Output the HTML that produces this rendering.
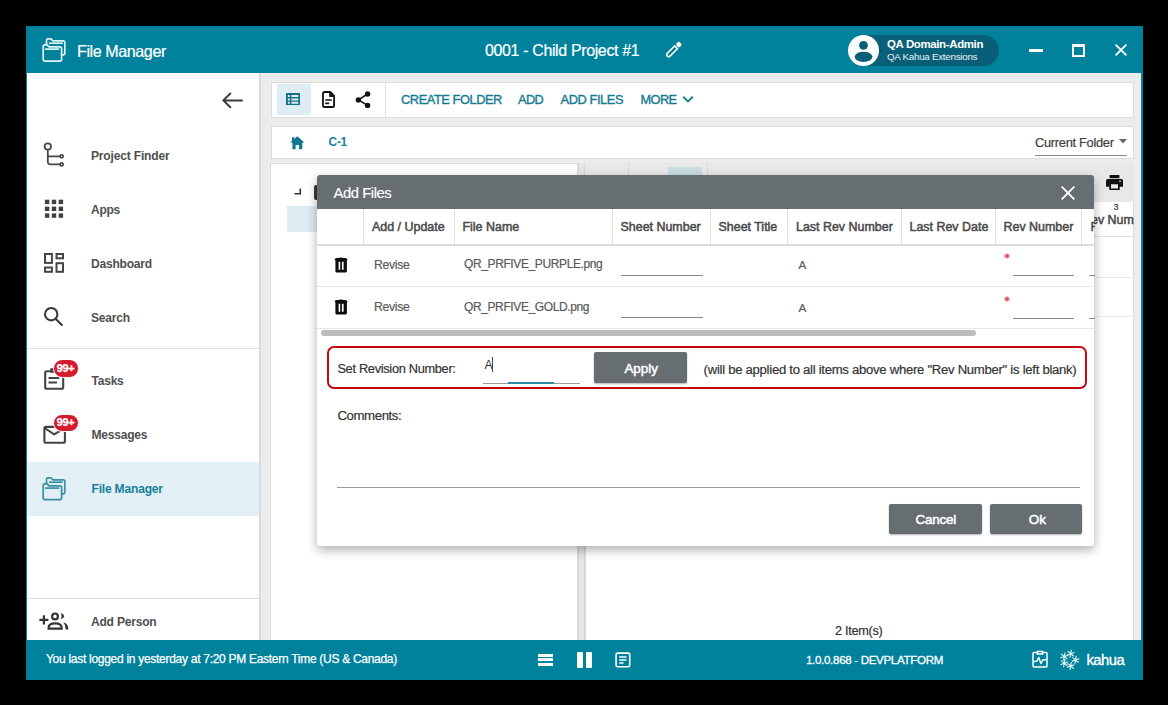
<!DOCTYPE html>
<html><head><meta charset="utf-8">
<style>
*{box-sizing:border-box;margin:0;padding:0}
html,body{width:1168px;height:705px;overflow:hidden;background:#000;font-family:"Liberation Sans",sans-serif}
.a{position:absolute}
.t{position:absolute;white-space:nowrap;line-height:1}
.b{font-weight:bold}
.sb{font-size:11.7px;font-weight:bold;color:#4f4f4f}
.tb{font-size:12.2px;color:#157a91;-webkit-text-stroke:0.35px #157a91}
.th{font-size:12.45px;font-weight:normal;color:#4a4a4a;-webkit-text-stroke:0.5px #4a4a4a}
.td{font-size:11.7px;color:#5a5a5a;-webkit-text-stroke:0.2px #5a5a5a}
.vl{position:absolute;width:1px;background:#dedede}
.hl{position:absolute;height:1px;background:#e2e2e2}
svg{position:absolute;overflow:visible}
</style></head><body>
<!-- ===== frame ===== -->
<div class="a" style="left:26px;top:26px;width:1117px;height:654px;background:#00819c"></div>
<div class="a" style="left:27px;top:73px;width:232px;height:567px;background:#fff"></div>
<div class="a" style="left:259px;top:73px;width:882px;height:567px;background:#ececec"></div>
<div class="a" style="left:259px;top:73px;width:2px;height:567px;background:#dadada"></div>

<!-- ===== header ===== -->
<svg style="left:36px;top:33px" width="36" height="34" viewBox="0 0 36 34" fill="none" stroke="#dff5f8" stroke-width="1.7" stroke-linejoin="round">
  <path d="M10.5 11.6V7.3a1.5 1.5 0 0 1 1.5-1.5h3l1.8 2h10.5a1.5 1.5 0 0 1 1.5 1.5v11a1.5 1.5 0 0 1-1.5 1.5h-1.3"/>
  <path d="M13 10.2H26.8"/>
  <path d="M7.2 13.4a1.5 1.5 0 0 1 1.5-1.5h2.5l1.9 2h11a1.5 1.5 0 0 1 1.5 1.5V26.6a1.5 1.5 0 0 1-1.5 1.5H8.7a1.5 1.5 0 0 1-1.5-1.5Z"/>
  <path d="M9 16.1H23.2"/>
</svg>
<div class="t" style="left:77px;top:42.65px;font-size:16.07px;color:#fff;-webkit-text-stroke:0.2px #fff;letter-spacing:-0.406px">File Manager</div>
<div class="t" style="left:485px;top:42.56px;font-size:15.96px;color:#fff;-webkit-text-stroke:0.2px #fff;letter-spacing:-0.351px">0001 - Child Project #1</div>
<svg style="left:660px;top:36px" width="30" height="28" viewBox="0 0 30 28">
  <g transform="translate(7.3 20.1) rotate(-45)">
    <path d="M1.9 -1.9H12.4V1.9H1.9A1.9 1.9 0 0 1 1.9 -1.9Z" fill="none" stroke="#f2fbfc" stroke-width="1.6"/>
    <path d="M3 0H11.5" stroke="#1d4f5e" stroke-width="0.9"/>
    <rect x="14" y="-2.4" width="4.6" height="4.8" rx="1.6" fill="#fff"/>
  </g>
</svg>
<!-- user pill -->
<div class="a" style="left:848px;top:34.5px;width:151px;height:31px;border-radius:15.5px;background:#0a5f78"></div>
<div class="a" style="left:848px;top:34.5px;width:31px;height:31px;border-radius:50%;background:#fff"></div>
<svg style="left:848px;top:34.5px" width="31" height="31" viewBox="0 0 31 31">
  <circle cx="15.5" cy="10.3" r="4.4" fill="#0a5f78"/>
  <ellipse cx="15.5" cy="21.8" rx="8.9" ry="5.1" fill="#0a5f78"/>
</svg>
<div class="t b" style="left:887px;top:38.74px;font-size:11.45px;color:#fff;letter-spacing:-0.344px">QA Domain-Admin</div>
<div class="t" style="left:887px;top:51.71px;font-size:9.77px;color:#e6f2f5;letter-spacing:-0.251px">QA Kahua Extensions</div>
<!-- window controls -->
<div class="a" style="left:1029px;top:48.5px;width:13.5px;height:3.5px;background:#fff"></div>
<div class="a" style="left:1071.5px;top:43.7px;width:13.6px;height:13px;border:2px solid #fff;border-top-width:3.5px"></div>
<svg style="left:1115px;top:44.3px" width="12" height="12" viewBox="0 0 12 12" stroke="#fff" stroke-width="1.9">
  <path d="M0.6 0.6L11.4 11.4M11.4 0.6L0.6 11.4"/>
</svg>

<!-- ===== sidebar ===== -->
<svg style="left:222px;top:92px" width="21" height="17" viewBox="0 0 21 17" fill="none" stroke="#3a3a3a" stroke-width="2" stroke-linecap="round" stroke-linejoin="round">
  <path d="M20 8.4H1.5M8.3 1.5L1.3 8.4l7 6.9"/>
</svg>
<!-- project finder -->
<svg style="left:36px;top:138px" width="36" height="34" viewBox="0 0 36 34" fill="none" stroke="#484848" stroke-width="1.8">
  <circle cx="11.8" cy="8.5" r="3.2"/>
  <path d="M11.8 11.7V24a2.4 2.4 0 0 0 2.4 2.4H24.1M11.8 18.3H24.1"/>
  <circle cx="25.6" cy="18.3" r="1.5"/>
  <circle cx="25.6" cy="26.4" r="1.5"/>
</svg>
<div class="t sb" style="left:91px;top:149.60px;font-size:12.05px;letter-spacing:-0.181px">Project Finder</div>
<!-- apps -->
<svg style="left:36px;top:192px" width="36" height="34" viewBox="0 0 36 34" fill="#3f3f3f">
  <rect x="8.9" y="7.7" width="4.4" height="4.4"/><rect x="15.8" y="7.7" width="4.4" height="4.4"/><rect x="22.7" y="7.7" width="4.4" height="4.4"/>
  <rect x="8.9" y="14.6" width="4.4" height="4.4"/><rect x="15.8" y="14.6" width="4.4" height="4.4"/><rect x="22.7" y="14.6" width="4.4" height="4.4"/>
  <rect x="8.9" y="21.4" width="4.4" height="4.4"/><rect x="15.8" y="21.4" width="4.4" height="4.4"/><rect x="22.7" y="21.4" width="4.4" height="4.4"/>
</svg>
<div class="t sb" style="left:91px;top:203.60px;font-size:12.05px;letter-spacing:-0.292px">Apps</div>
<!-- dashboard -->
<svg style="left:36px;top:246px" width="36" height="34" viewBox="0 0 36 34" fill="none" stroke="#454545" stroke-width="2">
  <rect x="9" y="8" width="6.9" height="8.9"/>
  <rect x="20.5" y="8" width="6.5" height="4.3"/>
  <rect x="9" y="21.5" width="6.9" height="4.3"/>
  <rect x="20.5" y="17.2" width="6.5" height="8.6"/>
</svg>
<div class="t sb" style="left:91px;top:257.70px;font-size:12.05px;letter-spacing:-0.229px">Dashboard</div>
<!-- search -->
<svg style="left:36px;top:300px" width="36" height="34" viewBox="0 0 36 34" fill="none" stroke="#3a3a3a" stroke-width="2.1" stroke-linecap="round">
  <circle cx="15.2" cy="14.2" r="6.2"/>
  <path d="M19.8 18.9L25.8 24.9"/>
</svg>
<div class="t sb" style="left:91px;top:311.90px;font-size:12.05px;letter-spacing:-0.234px">Search</div>
<div class="a" style="left:27px;top:348px;width:232px;height:1px;background:#e0e0e0"></div>
<!-- tasks -->
<svg style="left:36px;top:355px" width="48" height="40" viewBox="0 0 48 40" fill="none" stroke="#444" stroke-width="2.1">
  <rect x="9.2" y="16.3" width="18" height="17.4" rx="1.5"/>
  <path d="M15.3 14.2h4.5v2.5h-4.5Z" fill="#444"/>
  <path d="M12.5 23H23.3M12.5 27.5H21"/>
</svg>
<div class="a" style="left:53.4px;top:359.3px;width:25.4px;height:18.6px;border-radius:9.3px;background:#d31b2d;border:0.8px solid #fff"></div>
<div class="t b" style="left:56.8px;top:363.2px;font-size:11px;letter-spacing:-0.4px;color:#fff;-webkit-text-stroke:0.25px #fff">99+</div>
<div class="t sb" style="left:91.5px;top:374.60px;font-size:12.05px;letter-spacing:-0.242px">Tasks</div>
<!-- messages -->
<svg style="left:36px;top:410px" width="48" height="40" viewBox="0 0 48 40" fill="none" stroke="#444" stroke-width="2.1" stroke-linejoin="round">
  <rect x="8.4" y="16.9" width="20.5" height="15.9" rx="1.5"/>
  <path d="M8.6 18l9.6 6.4 10.5-6.4"/>
</svg>
<div class="a" style="left:53.4px;top:413.5px;width:25.4px;height:18.6px;border-radius:9.3px;background:#d31b2d;border:0.8px solid #fff"></div>
<div class="t b" style="left:56.8px;top:417.4px;font-size:11px;letter-spacing:-0.4px;color:#fff;-webkit-text-stroke:0.25px #fff">99+</div>
<div class="t sb" style="left:91.5px;top:428.80px;font-size:12.05px;letter-spacing:-0.240px">Messages</div>
<!-- file manager (active) -->
<div class="a" style="left:28px;top:462px;width:231px;height:53.5px;background:#e2eff4"></div>
<svg style="left:36px;top:471.6px" width="36" height="34" viewBox="0 0 36 34" fill="none" stroke="#3a8fa2" stroke-width="1.7" stroke-linejoin="round">
  <path d="M10.5 11.6V7.3a1.5 1.5 0 0 1 1.5-1.5h3l1.8 2h10.5a1.5 1.5 0 0 1 1.5 1.5v11a1.5 1.5 0 0 1-1.5 1.5h-1.3"/>
  <path d="M13 10.2H26.8"/>
  <path d="M7.2 13.4a1.5 1.5 0 0 1 1.5-1.5h2.5l1.9 2h11a1.5 1.5 0 0 1 1.5 1.5V26.1a1.5 1.5 0 0 1-1.5 1.5H8.7a1.5 1.5 0 0 1-1.5-1.5Z"/>
  <path d="M9 16.1H23.2"/>
</svg>
<div class="t sb" style="left:91.5px;top:483.10px;color:#17809a;font-size:12.05px;letter-spacing:-0.195px">File Manager</div>
<div class="a" style="left:27px;top:597.5px;width:232px;height:1px;background:#dedede"></div>
<!-- add person -->
<svg style="left:32px;top:600px" width="44" height="40" viewBox="0 0 44 40" fill="none" stroke="#333" stroke-width="2.2">
  <path d="M7.4 19.8H16.4M11.9 15.3V24.4"/>
  <circle cx="23" cy="16.4" r="2.9"/>
  <path d="M16.6 28.6v-0.8c0-2.7 2.6-4.4 6.5-4.4s6.5 1.7 6.5 4.4v0.8Z"/>
  <path d="M28.6 12.8Q36 16.2 28.6 19.6Q30.6 16.2 28.6 12.8Z" fill="#333" stroke="none"/>
  <path d="M31.2 22.3Q36.4 23.6 36.4 29.5H33.7Q33.8 25 31.2 22.3Z" fill="#333" stroke="none"/>
</svg>
<div class="t sb" style="left:91px;top:615.80px;font-size:12.05px;letter-spacing:-0.219px">Add Person</div>


<!-- ===== main content ===== -->
<!-- toolbar -->
<div class="a" style="left:270.5px;top:81.5px;width:863px;height:36px;background:#fff;border:1px solid #dcdcdc"></div>
<div class="a" style="left:276.5px;top:84px;width:34.5px;height:30.5px;background:#deedf3"></div>
<svg style="left:286.1px;top:93.2px" width="14" height="12" viewBox="0 0 13.6 11.6" fill="#137088">
  <path d="M0 0h13.6v11.6H0Z M1.8 1.8v2.1h1.9V1.8Z M5.2 1.8v2.1H12V1.8Z M1.8 5.2v2h1.9v-2Z M5.2 5.2v2H12v-2Z M1.8 8.5v2h1.9v-2Z M5.2 8.5v2H12v-2Z" fill-rule="evenodd"/>
</svg>
<svg style="left:322px;top:91px" width="13" height="17" viewBox="0 0 13 17" fill="none" stroke="#111" stroke-width="1.8" stroke-linejoin="round">
  <path d="M2.6 1h5.8l3.7 3.8v9.6a1.6 1.6 0 0 1-1.6 1.6H2.6a1.6 1.6 0 0 1-1.6-1.6V2.6A1.6 1.6 0 0 1 2.6 1Z"/>
  <path d="M8.1 1.2v4h4" fill="#111"/>
  <path d="M3.9 9.0h5.2M3.9 12.3h2.6" stroke-width="1.7" stroke-linecap="round"/>
</svg>
<svg style="left:355px;top:90.5px" width="16" height="17" viewBox="0 0 16 17" fill="#111">
  <circle cx="12.6" cy="3" r="2.7"/><circle cx="3.4" cy="8.9" r="2.7"/><circle cx="12.6" cy="14.4" r="2.7"/>
  <path d="M3.4 8.9L12.6 3M3.4 8.9L12.6 14.4" stroke="#111" stroke-width="1.6"/>
</svg>
<div class="a" style="left:385px;top:82.5px;width:1px;height:34px;background:#e3e3e3"></div>
<div class="t tb" style="left:401px;top:94.48px;font-size:12.81px;letter-spacing:-0.422px">CREATE FOLDER</div>
<div class="t tb" style="left:518px;top:94.48px;font-size:12.81px;letter-spacing:-0.643px">ADD</div>
<div class="t tb" style="left:560.5px;top:94.48px;font-size:12.81px;letter-spacing:-0.394px">ADD FILES</div>
<div class="t tb" style="left:640.5px;top:94.48px;font-size:12.81px;letter-spacing:-0.609px">MORE</div>
<svg style="left:682px;top:95px" width="12" height="9" viewBox="0 0 12 9" fill="none" stroke="#167d94" stroke-width="1.9">
  <path d="M1.2 1.8l4.8 4.6 4.8-4.6"/>
</svg>
<!-- breadcrumb -->
<div class="a" style="left:270.5px;top:125.5px;width:863px;height:33px;background:#fff;border:1px solid #dcdcdc"></div>
<svg style="left:290px;top:135.5px" width="15" height="14" viewBox="0 0 15 14" fill="#0f7690">
  <path d="M7.3 0.2L14.4 6.6h-2.1v6.6H9.1V9H5.6v4.2H2.4V6.6H0.2Z"/><path d="M2 1.2h2.3v2.5L2 5.8Z"/>
</svg>
<div class="t b" style="left:328.6px;top:137px;font-size:11.9px;letter-spacing:-0.3px;color:#17809a">C-1</div>
<div class="t" style="left:1035px;top:137.08px;font-size:12.86px;color:#3e3e3e;-webkit-text-stroke:0.2px #3e3e3e;letter-spacing:-0.304px">Current Folder</div>
<svg style="left:1119px;top:139px" width="8" height="5" viewBox="0 0 8 5" fill="#666"><path d="M0 0h8L4 4.5Z"/></svg>
<div class="a" style="left:1035px;top:154.5px;width:92px;height:1.3px;background:#8d8d8d"></div>
<!-- left panel -->
<div class="a" style="left:270px;top:162.5px;width:308px;height:478px;background:#fff;border:1px solid #dcdcdc;border-bottom:none"></div>
<svg style="left:294px;top:188px" width="8" height="7" viewBox="0 0 8 7" fill="none" stroke="#333" stroke-width="1.6"><path d="M0.5 5.8H6.3V0.5"/></svg>
<div class="a" style="left:313.5px;top:184.5px;width:6px;height:15px;background:#3b3b3b;border-radius:2px"></div>
<div class="a" style="left:287px;top:206px;width:31px;height:26px;background:#ddecf2"></div>
<!-- divider strip -->
<div class="a" style="left:578px;top:162.5px;width:7px;height:478px;background:#e6e6e6;border-left:1px solid #d6d6d6;border-right:1px solid #d6d6d6"></div>
<!-- right panel -->
<div class="a" style="left:584.5px;top:162.5px;width:549.5px;height:478px;background:#fff;border:1px solid #dcdcdc;border-bottom:none"></div>
<div class="a" style="left:585px;top:163px;width:548.5px;height:39px;background:#e8e8e8"></div>
<div class="a" style="left:627.5px;top:163px;width:1px;height:39px;background:#d6d6d6"></div>
<div class="a" style="left:706.5px;top:163px;width:1px;height:39px;background:#d6d6d6"></div>
<div class="a" style="left:668px;top:167px;width:34px;height:12px;background:#c9dde3"></div>
<svg style="left:1105.8px;top:175.3px" width="17" height="15" viewBox="0 0 17 15" fill="#111">
  <path d="M3.6 0h9.8v3.2H3.6Z"/><path d="M1.6 4.1h13.8a1.6 1.6 0 0 1 1.6 1.6v6h-3.3v3.3H3.3v-3.3H0V5.7a1.6 1.6 0 0 1 1.6-1.6Z M5 9.2v4.2h7V9.2Z M14 5.4a0.8 0.8 0 1 0 0.01 0Z" fill-rule="evenodd"/>
</svg>
<div class="t" style="left:1113.8px;top:202.5px;font-size:8.5px;color:#333;-webkit-text-stroke:0.2px #333">3</div>
<div class="t th" style="left:1082px;top:214px">Rev Num</div>
<div class="a" style="left:585px;top:236px;width:548.5px;height:1px;background:#dedede"></div>
<div class="a" style="left:585px;top:277px;width:548.5px;height:1px;background:#ececec"></div>
<div class="a" style="left:585px;top:316px;width:548.5px;height:1px;background:#ececec"></div>
<div class="t" style="left:835px;top:625.29px;font-size:12.71px;color:#333;-webkit-text-stroke:0.2px #333;letter-spacing:-0.298px">2 Item(s)</div>


<!-- ===== modal ===== -->
<div class="a" style="left:317.3px;top:175px;width:777.2px;height:371px;background:#fff;border-radius:3px;box-shadow:0 4px 11px rgba(0,0,0,0.32);overflow:hidden">
</div>
<div class="a" style="left:317.3px;top:175px;width:777.2px;height:34px;background:#666e71;border-radius:3px 3px 0 0"></div>
<div class="t" style="left:333.6px;top:185.6px;font-size:14.8px;letter-spacing:-0.45px;color:#fff;-webkit-text-stroke:0.15px #fff">Add Files</div>
<svg style="left:1061px;top:186px" width="14" height="14" viewBox="0 0 14 14" stroke="#fff" stroke-width="1.9">
  <path d="M0.7 0.7L13.3 13.3M13.3 0.7L0.7 13.3"/>
</svg>
<!-- table -->
<div class="vl" style="left:363px;top:209px;height:36px"></div>
<div class="vl" style="left:453.5px;top:209px;height:36px"></div>
<div class="vl" style="left:612px;top:209px;height:36px"></div>
<div class="vl" style="left:709.5px;top:209px;height:36px"></div>
<div class="vl" style="left:787px;top:209px;height:36px"></div>
<div class="vl" style="left:901px;top:209px;height:36px"></div>
<div class="vl" style="left:994.5px;top:209px;height:36px"></div>
<div class="vl" style="left:1081px;top:209px;height:36px"></div>
<div class="a" style="left:317px;top:244px;width:777.5px;height:2px;background:#dcdcdc"></div>
<div class="t th" style="left:372px;top:221.4px">Add / Update</div>
<div class="t th" style="left:462.5px;top:221.4px">File Name</div>
<div class="t th" style="left:620.5px;top:221.4px">Sheet Number</div>
<div class="t th" style="left:718.5px;top:221.4px">Sheet Title</div>
<div class="t th" style="left:796px;top:221.4px">Last Rev Number</div>
<div class="t th" style="left:909.5px;top:221.4px">Last Rev Date</div>
<div class="t th" style="left:1003.5px;top:221.4px">Rev Number</div>
<div class="a" style="left:1082px;top:209px;width:12.5px;height:36px;overflow:hidden"><div class="t th" style="left:8.5px;top:12.4px">F</div></div>
<div class="hl" style="left:317px;top:286px;width:777.5px;background:#e6e6e6"></div>
<div class="hl" style="left:317px;top:328px;width:777.5px;background:#e6e6e6"></div>
<!-- row 1 -->
<svg style="left:328px;top:250.6px" width="28" height="28" viewBox="0 0 28 28" fill="#0d0d0d">
  <path d="M6.5 8.3Q7 7.3 8.8 7.1H10.5Q11 6.6 13 6.6T15.5 7.1H17.2Q19 7.3 19.5 8.3L18.9 9.4V20Q18.9 21.6 17.3 21.6H8.9Q7.4 21.6 7.4 20V9.4Z M10.6 10.8v7.9h1.6v-7.9Z M13.9 10.8v7.9h1.7v-7.9Z" fill-rule="evenodd"/>
</svg>
<div class="t td" style="left:374px;top:258.50px;font-size:12.29px;letter-spacing:-0.357px">Revise</div>
<div class="t td" style="left:464px;top:259.42px;font-size:11.97px;letter-spacing:-0.365px">QR_PRFIVE_PURPLE.png</div>
<div class="hl" style="left:620.5px;top:275px;width:82px;background:#8a8a8a"></div>
<div class="t td" style="left:798.5px;top:259.2px;font-size:11.7px">A</div>
<svg style="left:1002.3px;top:251.3px" width="10" height="10" viewBox="0 0 10 10" fill="#e5464b"><path d="M5.00 1.40L5.75 3.70L8.12 3.20L6.50 5.00L8.12 6.80L5.75 6.30L5.00 8.60L4.25 6.30L1.88 6.80L3.50 5.00L1.88 3.20L4.25 3.70Z"/></svg>
<div class="hl" style="left:1012.5px;top:275.3px;width:61.5px;background:#8a8a8a"></div>
<div class="hl" style="left:1089px;top:275.3px;width:5.5px;background:#8a8a8a"></div>
<!-- row 2 -->
<svg style="left:328px;top:293px" width="28" height="28" viewBox="0 0 28 28" fill="#0d0d0d">
  <path d="M6.5 8.3Q7 7.3 8.8 7.1H10.5Q11 6.6 13 6.6T15.5 7.1H17.2Q19 7.3 19.5 8.3L18.9 9.4V20Q18.9 21.6 17.3 21.6H8.9Q7.4 21.6 7.4 20V9.4Z M10.6 10.8v7.9h1.6v-7.9Z M13.9 10.8v7.9h1.7v-7.9Z" fill-rule="evenodd"/>
</svg>
<div class="t td" style="left:374px;top:300.90px;font-size:12.29px;letter-spacing:-0.357px">Revise</div>
<div class="t td" style="left:464px;top:301.72px;font-size:11.97px;letter-spacing:-0.369px">QR_PRFIVE_GOLD.png</div>
<div class="hl" style="left:620.5px;top:317.2px;width:82px;background:#8a8a8a"></div>
<div class="t td" style="left:798.5px;top:301.6px;font-size:11.7px">A</div>
<svg style="left:1002.3px;top:293.6px" width="10" height="10" viewBox="0 0 10 10" fill="#e5464b"><path d="M5.00 1.40L5.75 3.70L8.12 3.20L6.50 5.00L8.12 6.80L5.75 6.30L5.00 8.60L4.25 6.30L1.88 6.80L3.50 5.00L1.88 3.20L4.25 3.70Z"/></svg>
<div class="hl" style="left:1012.5px;top:317.5px;width:61.5px;background:#8a8a8a"></div>
<div class="hl" style="left:1089px;top:317.5px;width:5.5px;background:#8a8a8a"></div>
<!-- scrollbar -->
<div class="a" style="left:320.5px;top:330.4px;width:655px;height:6px;background:#bdbdbd;border-radius:3px"></div>
<!-- revision box -->
<div class="a" style="left:327px;top:346.4px;width:759.5px;height:42.6px;border:2.5px solid #c20a14;border-radius:7px"></div>
<div class="t" style="left:337.4px;top:363.08px;font-size:12.81px;color:#333;-webkit-text-stroke:0.2px #333;letter-spacing:-0.312px">Set Revision Number:</div>
<div class="t" style="left:484.4px;top:359.3px;font-size:12.2px;color:#333">A</div>
<div class="a" style="left:491.6px;top:357.3px;width:1.1px;height:14.8px;background:#2b4a52"></div>
<div class="hl" style="left:482.7px;top:383px;width:97px;background:#9a9a9a"></div>
<div class="a" style="left:508.3px;top:382.3px;width:45.7px;height:2px;background:#2a8ba6"></div>
<div class="a" style="left:594.2px;top:352.2px;width:93.3px;height:31.1px;background:#666e72;border-radius:2px;box-shadow:0 1px 2px rgba(0,0,0,0.3)"></div>
<div class="t" style="left:624.4px;top:361.7px;font-size:13.4px;letter-spacing:0px;color:#fff;-webkit-text-stroke:0.5px #fff">Apply</div>
<div class="t" style="left:703.6px;top:362.97px;font-size:13.12px;color:#333;-webkit-text-stroke:0.2px #333;letter-spacing:-0.275px">(will be applied to all items above where "Rev Number" is left blank)</div>
<!-- comments -->
<div class="t" style="left:337.4px;top:409.37px;font-size:13.23px;color:#333;-webkit-text-stroke:0.2px #333;letter-spacing:-0.402px">Comments:</div>
<div class="a" style="left:337px;top:487px;width:743px;height:1.3px;background:#9a9a9a"></div>
<!-- buttons -->
<div class="a" style="left:889px;top:503.5px;width:92.7px;height:30.7px;background:#666e72;border-radius:2px;box-shadow:0 1px 2px rgba(0,0,0,0.3)"></div>
<div class="t" style="left:915.4px;top:512.9px;font-size:13.4px;letter-spacing:-0.15px;color:#fff;-webkit-text-stroke:0.5px #fff">Cancel</div>
<div class="a" style="left:989.8px;top:503.5px;width:92.7px;height:30.7px;background:#666e72;border-radius:2px;box-shadow:0 1px 2px rgba(0,0,0,0.3)"></div>
<div class="t" style="left:1028.8px;top:512.9px;font-size:13.4px;letter-spacing:0px;color:#fff;-webkit-text-stroke:0.5px #fff">Ok</div>

<!-- ===== footer ===== -->
<div class="a" style="left:26px;top:640px;width:1117px;height:40px;background:#00819c"></div>
<div class="t" style="left:46px;top:654.22px;font-size:11.97px;color:#fff;-webkit-text-stroke:0.25px #fff;letter-spacing:-0.270px">You last logged in yesterday at 7:20 PM Eastern Time (US &amp; Canada)</div>
<div class="a" style="left:538px;top:654px;width:14.6px;height:3px;background:#fff"></div>
<div class="a" style="left:538px;top:658.3px;width:14.6px;height:3px;background:#fff"></div>
<div class="a" style="left:538px;top:662.6px;width:14.6px;height:3px;background:#fff"></div>
<div class="a" style="left:577px;top:651.6px;width:6px;height:16.4px;background:#fff;border-radius:1px"></div>
<div class="a" style="left:585.6px;top:651.6px;width:6px;height:16.4px;background:#fff;border-radius:1px"></div>
<svg style="left:615px;top:652px" width="16" height="16" viewBox="0 0 16 16" fill="none" stroke="#fff" stroke-width="1.6">
  <rect x="1.1" y="1.1" width="13.6" height="13.6" rx="1.5"/>
  <path d="M4.3 5H11.5M4.3 8H11.5M4.3 11H8.5" stroke-width="1.5"/>
</svg>
<div class="t" style="left:806px;top:654.53px;font-size:11.55px;color:#fff;-webkit-text-stroke:0.3px #fff;letter-spacing:-0.312px">1.0.0.868 - DEVPLATFORM</div>
<svg style="left:1032px;top:650px" width="16" height="18" viewBox="0 0 16 18" fill="none" stroke="#fff" stroke-width="1.5" stroke-linejoin="round">
  <path d="M5.2 2.6H2a1 1 0 0 0-1 1V16a1 1 0 0 0 1 1h12a1 1 0 0 0 1-1V3.6a1 1 0 0 0-1-1h-3.2"/>
  <path d="M5.2 1.4h5.6v2.6H5.2Z"/>
  <path d="M1.2 11.5l3.5-0.2 2-3.8 2.3 6 1.8-3.5 4-0.5"/>
</svg>
<svg style="left:1056px;top:648px" width="26" height="24" viewBox="0 0 26 24" fill="none" stroke="#e4f6f9" stroke-width="1.15" stroke-linecap="round"><path d="M15.33 2.15L14.07 9.25M11.94 3.39L17.46 8.01M18.08 4.47L11.32 6.93M8.93 5.05L7.67 12.15M5.54 6.29L11.06 10.91M11.68 7.37L4.92 9.83M20.23 8.35L18.97 15.45M16.84 9.59L22.36 14.21M22.98 10.67L16.22 13.13M8.93 11.65L7.67 18.75M5.54 12.89L11.06 17.51M11.68 13.97L4.92 16.43M15.33 14.45L14.07 21.55M11.94 15.69L17.46 20.31M18.08 16.77L11.32 19.23"/></svg>
<div class="t" style="left:1086.5px;top:653.21px;font-size:14.70px;color:#fff;-webkit-text-stroke:0.35px #fff;letter-spacing:-0.477px">kahua</div>
</body></html>
